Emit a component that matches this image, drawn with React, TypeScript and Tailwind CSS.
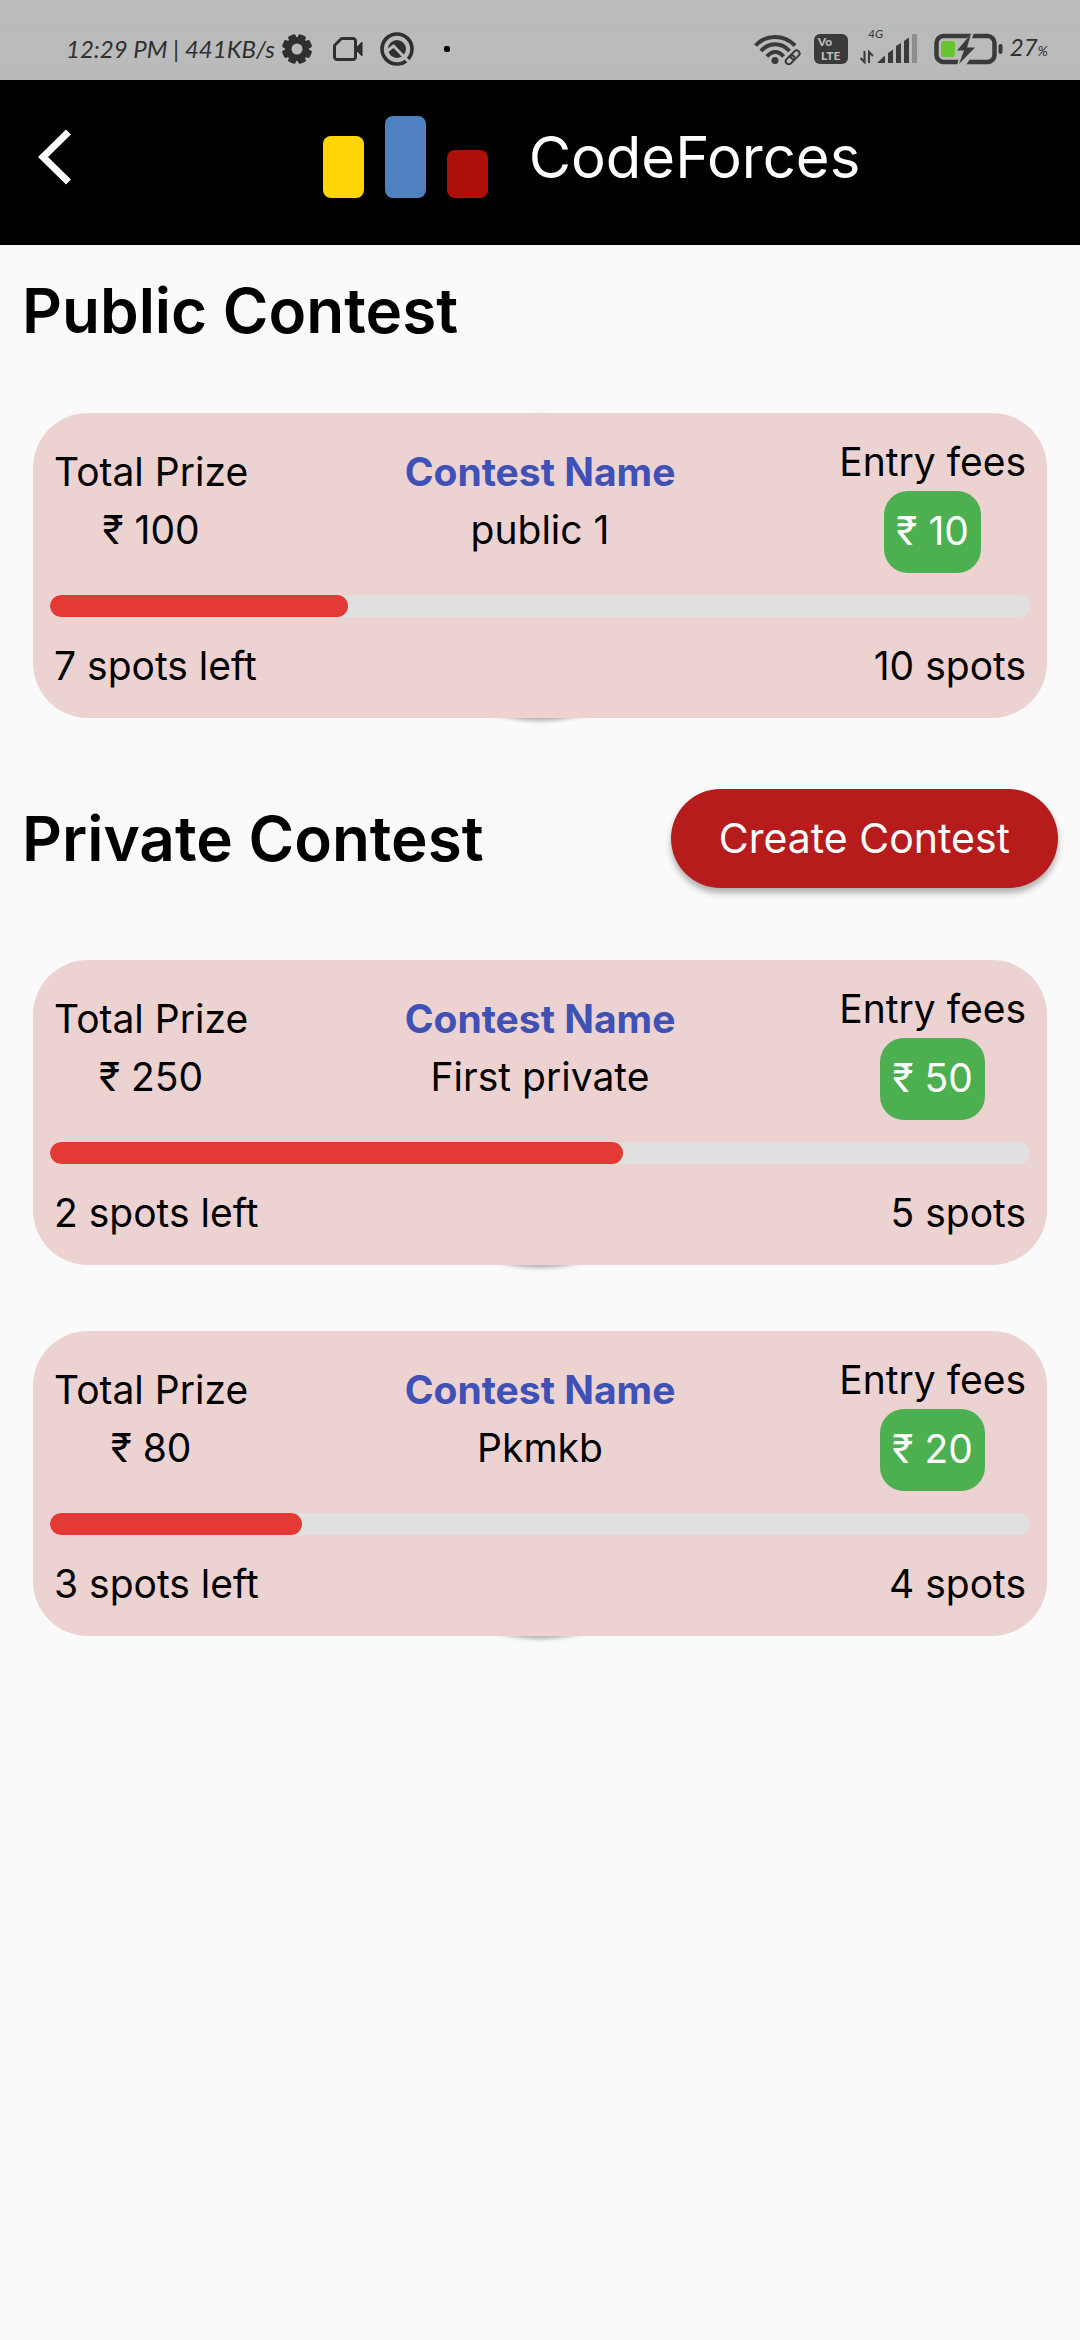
import type { ReactNode } from "react";

type Contest = {
  prize: string;
  name: string;
  fee: string;
  left: string;
  total: string;
  percent: number;
};

const publicContests: Contest[] = [
  { prize: "₹ 100", name: "public 1", fee: "₹ 10", left: "7 spots left", total: "10 spots", percent: 30.4 },
];

const privateContests: Contest[] = [
  { prize: "₹ 250", name: "First private", fee: "₹ 50", left: "2 spots left", total: "5 spots", percent: 58.5 },
  { prize: "₹ 80", name: "Pkmkb", fee: "₹ 20", left: "3 spots left", total: "4 spots", percent: 25.7 },
];

function GearIcon() {
  return (
    <svg className="h-[30px] w-[30px]" viewBox="0 0 30 30" aria-hidden="true">
      <g fill="#2f2f2f">
        <circle cx="15" cy="15" r="12" />
        {[22.5, 67.5, 112.5, 157.5].map((a) => (
          <rect key={a} x="11" y="0" width="8" height="30" rx="2" transform={`rotate(${a} 15 15)`} />
        ))}
      </g>
      <circle cx="15" cy="15" r="5.500" fill="#bababa" />
    </svg>
  );
}

function VideoIcon() {
  return (
    <svg className="h-[26px] w-8" viewBox="0 0 32 26" aria-hidden="true">
      <path d="M9.500 2.500H21a2.500 2.500 0 0 1 2.500 2.500V21a2.500 2.500 0 0 1-2.500 2.500H5A2.500 2.500 0 0 1 2.500 21V9.500Z" fill="none" stroke="#2f2f2f" strokeWidth="3" strokeLinejoin="round" />
      <path d="M24 12 30 6V20L24 14Z" fill="#2f2f2f" stroke="#2f2f2f" />
    </svg>
  );
}

function RemoteIcon() {
  return (
    <svg className="h-[34px] w-[34px]" viewBox="0 0 34 34" aria-hidden="true">
      <circle cx="17" cy="17" r="15" fill="none" stroke="#2f2f2f" strokeWidth="3.600" />
      <circle cx="17" cy="17" r="9" fill="#2f2f2f" />
      <path d="M6 20 13.500 14 30 31" fill="none" stroke="#bababa" strokeWidth="3" />
    </svg>
  );
}

function WifiIcon() {
  return (
    <svg className="h-8 w-12" viewBox="0 0 48 32" aria-hidden="true">
      <g fill="none" stroke="#3a3a3a" strokeWidth="4">
        <path d="M1.500 12.500C12 1 30 1 41 12.500" />
        <path d="M7 18C15 9 27.500 9 35.500 18" />
        <path d="M13 23.500C18 17.500 24.500 17.500 29.500 23.500" />
      </g>
      <circle cx="21" cy="27.500" r="3.500" fill="#3a3a3a" />
      <g fill="none" stroke="#3a3a3a" strokeWidth="2" transform="rotate(-45 39 24)">
        <rect x="30" y="21" width="10" height="6" rx="3" />
        <rect x="37" y="21" width="10" height="6" rx="3" />
      </g>
    </svg>
  );
}

function SignalIcon() {
  return (
    <svg className="h-[38px] w-[58px]" viewBox="0 0 58 38" aria-hidden="true">
      <text x="8" y="11" fontSize="12" fontStyle="italic" fontFamily="Lato, sans-serif" fill="#3a3a3a">4G</text>
      <g fill="none" stroke="#3a3a3a" strokeWidth="2">
        <path d="M4.500 24V35L0.500 31" />
        <path d="M9 36V25L13 29" />
      </g>
      <path d="M17 36 25 28.500V36Z" fill="#3a3a3a" />
      <path d="M28 36V26L33 22.500V36ZM36 36V19L41 16V36ZM44 36V14L49 10.500V36Z" fill="#3a3a3a" />
      <rect x="52" y="7" width="5" height="29" fill="#8e8e8e" />
    </svg>
  );
}

function BatteryIcon() {
  return (
    <svg className="h-8 w-[70px]" viewBox="0 0 70 32" aria-hidden="true">
      <rect x="2.500" y="3" width="58" height="26" rx="7" fill="none" stroke="#3a3a3a" strokeWidth="4.500" />
      <rect x="7" y="8" width="14" height="16" rx="2.500" fill="#67c52f" />
      <path d="M38 0 20 18.500H27L23 32H32L43 15.500H34L40 0Z" fill="#bababa" />
      <path d="M37 1 23 17.500H30L25 31 41 14.500H33Z" fill="#3a3a3a" />
      <rect x="64.500" y="11" width="4" height="10" rx="2" fill="#3a3a3a" />
    </svg>
  );
}

function StatusBar() {
  return (
    <div className="flex h-20 items-center justify-between bg-linear-to-b from-[#b9bcba] to-[#bababa] pt-[18px] pr-8 pl-[66px] text-[24px] leading-8 font-normal text-[#2f2f2f] italic">
      <div className="flex items-center whitespace-nowrap">
        <span className="w-[216px] font-['Lato',sans-serif]">12:29 PM | 441KB/s</span>
        <GearIcon />
        <span className="ml-5"><VideoIcon /></span>
        <span className="ml-4"><RemoteIcon /></span>
        <span className="ml-[30px] h-1.5 w-1.5 rounded-xs bg-black" />
      </div>
      <div className="flex items-center whitespace-nowrap">
        <WifiIcon />
        <span className="ml-3 flex h-[30px] w-[34px] flex-col items-center justify-center rounded-md bg-[#3a3a3a] font-['Lato',sans-serif] text-[12px] leading-[14px] font-black text-[#bababa] not-italic">
          <span className="self-start pl-1">Vo</span>
          <span>LTE</span>
        </span>
        <span className="mb-1.5 ml-3"><SignalIcon /></span>
        <span className="ml-4"><BatteryIcon /></span>
        <span className="ml-1.5 font-['Lato',sans-serif]">
          27<span className="text-[14px]">%</span>
        </span>
      </div>
    </div>
  );
}

function Logo() {
  return (
    <svg className="h-[82px] w-[166px]" viewBox="0 0 166 82" aria-hidden="true">
      <rect x="0" y="20" width="41" height="62" rx="8" fill="#ffd505" />
      <rect x="62" y="0" width="41" height="82" rx="8" fill="#4f81c0" />
      <rect x="124" y="34" width="41" height="48" rx="8" fill="#ad0f0a" />
    </svg>
  );
}

function Header() {
  return (
    <header className="flex h-[165px] items-center bg-black pb-3 pl-9 text-white">
      <button type="button" aria-label="Back" className="w-[67px]">
        <svg className="h-14 w-9" viewBox="0 0 36 56" aria-hidden="true">
          <path d="M32.500 3 7 28 32.500 53" fill="none" stroke="#fff" strokeWidth="7" />
        </svg>
      </button>
      <div className="flex flex-1 items-center justify-center gap-10">
        <Logo />
        <h1 className="text-[58px] leading-[80px]">CodeForces</h1>
      </div>
    </header>
  );
}

function SectionTitle({ children }: { children: ReactNode }) {
  return <h2 className="text-[62px] leading-[96px] font-semibold">{children}</h2>;
}

function ContestCard({ contest }: { contest: Contest }) {
  return (
    <article className="relative isolate">
      <div className="absolute top-0 left-1/2 -z-20 aspect-square h-full -translate-x-1/2 rounded-full shadow-[0_3px_4px_rgba(0,0,0,0.3)]" />
      <div className="rounded-[55px] bg-[#edd2d2] px-[17px] pt-5 pb-[21px]">
        <div className="grid grid-cols-[1fr_auto_1fr] px-1 text-[39px]">
          <div className="flex flex-col items-center justify-self-start pt-2.5 leading-[58px]">
            <span>Total Prize</span>
            <span>{contest.prize}</span>
          </div>
          <div className="flex flex-col items-center pt-2.5 leading-[58px]">
            <span className="font-bold text-[#3f51b5]">Contest Name</span>
            <span>{contest.name}</span>
          </div>
          <div className="flex flex-col items-center justify-self-end leading-[58px]">
            <span>Entry fees</span>
            <span className="rounded-3xl bg-[#4caf50] px-3 pt-[11px] pb-[13px] text-white">{contest.fee}</span>
          </div>
        </div>
        <div
          role="progressbar"
          aria-label="Spots filled"
          aria-valuenow={contest.percent}
          className="mt-[22px] h-[22px] overflow-hidden rounded-full bg-[#e0e0e0]"
        >
          <div className="h-full rounded-full bg-[#e53935]" style={{ width: `${contest.percent}%` }} />
        </div>
        <div className="mt-5 flex justify-between px-1 pb-0.5 text-[39px] leading-[58px]">
          <span>{contest.left}</span>
          <span>{contest.total}</span>
        </div>
      </div>
    </article>
  );
}

export default function App() {
  return (
    <div className="min-h-screen bg-[#fafafa] font-['Inter','Noto_Sans',sans-serif] text-black">
      <StatusBar />
      <Header />
      <main className="pt-[18px]">
        <section>
          <div className="px-[22px]">
            <SectionTitle>Public Contest</SectionTitle>
          </div>
          <div className="mt-[54px] px-[33px]">
            {publicContests.map((c) => (
              <ContestCard key={c.name} contest={c} />
            ))}
          </div>
        </section>
        <section className="mt-[71px]">
          <div className="flex items-center justify-between px-[22px]">
            <SectionTitle>Private Contest</SectionTitle>
            <button
              type="button"
              className="h-[99px] rounded-full bg-[#b71c1c] px-12 text-[41px] whitespace-nowrap text-white shadow-[0_5px_6px_rgba(0,0,0,0.3)]"
            >
              Create Contest
            </button>
          </div>
          <div className="mt-[72px] flex flex-col gap-[66px] px-[33px]">
            {privateContests.map((c) => (
              <ContestCard key={c.name} contest={c} />
            ))}
          </div>
        </section>
      </main>
    </div>
  );
}
